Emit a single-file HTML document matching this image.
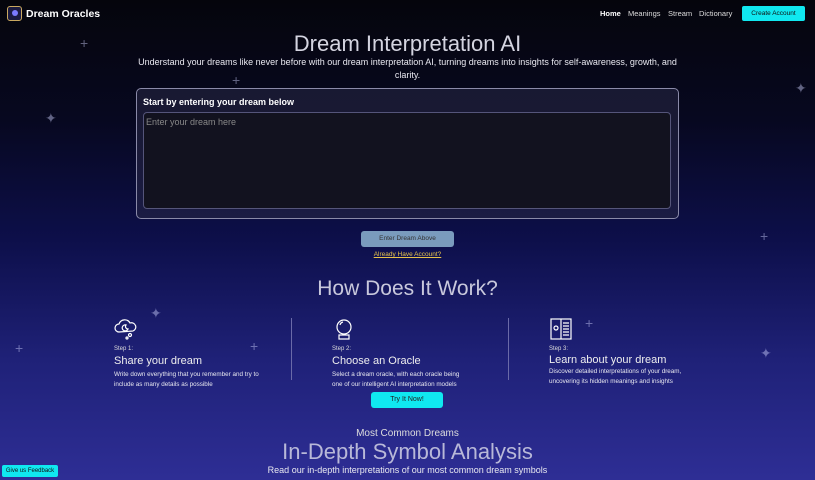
<!DOCTYPE html>
<html><head><style>
*{margin:0;padding:0;box-sizing:border-box}
body{width:815px;height:480px;overflow:hidden;font-family:"Liberation Sans",sans-serif;color:#fff;
background:linear-gradient(180deg,#05050c 0%,#070820 25%,#0d0f4a 50%,#1f2178 75%,#2e2e95 100%);position:relative}
.a{position:absolute}
.star{position:absolute;color:#cfd3ff;font-size:14px;opacity:.45}
</style></head><body>
<div class="a" style="left:7px;top:6px;width:15px;height:15px;border:1.5px solid #c9a860;border-radius:3px;background:#1a1a40"></div>
<div class="a" style="left:12px;top:10px;width:6px;height:6px;border-radius:50%;background:#7a7aff"></div>
<div class="a" style="left:26px;top:8px;font-size:10.5px;font-weight:bold">Dream Oracles</div>
<div class="a" style="left:600px;top:9px;font-size:7.5px;font-weight:bold">Home</div>
<div class="a" style="left:628px;top:9px;font-size:7.5px;color:#ddd">Meanings</div>
<div class="a" style="left:668px;top:9px;font-size:7.5px;color:#ddd">Stream</div>
<div class="a" style="left:699px;top:9px;font-size:7.5px;color:#ddd">Dictionary</div>
<div class="a" style="left:742px;top:6px;width:63px;height:15px;background:#10e8f0;border-radius:2px;color:#111;font-size:6.5px;text-align:center;line-height:15px">Create Account</div>
<div class="a" style="left:0;width:815px;top:31px;text-align:center;font-size:22px;color:#d4d4e0">Dream Interpretation AI</div>
<div class="a" style="left:130px;width:555px;top:56px;text-align:center;font-size:9px;line-height:13px;color:#e8e8f0">Understand your dreams like never before with our dream interpretation AI, turning dreams into insights for self-awareness, growth, and clarity.</div>
<div class="a" style="left:136px;top:88px;width:543px;height:131px;border:1px solid #8a8aa8;border-radius:5px;background:rgba(40,40,70,.55)"></div>
<div class="a" style="left:143px;top:97px;font-size:9px;font-weight:bold">Start by entering your dream below</div>
<div class="a" style="left:143px;top:112px;width:528px;height:97px;border:1px solid #55557a;border-radius:4px;background:#12121f"></div>
<div class="a" style="left:146px;top:117px;font-size:9px;color:#888">Enter your dream here</div>
<div class="a" style="left:361px;top:231px;width:93px;height:16px;background:#7a9bbd;border-radius:3px;color:#333;font-size:6.5px;text-align:center;line-height:16px">Enter Dream Above</div>
<div class="a" style="left:0;width:815px;top:251px;text-align:center;font-size:6.5px;color:#e7c24a;text-decoration:underline">Already Have Account?</div>
<div class="a" style="left:0;width:815px;top:277px;text-align:center;font-size:21px;color:#c8c8dc">How Does It Work?</div>
<div class="a" style="left:291px;top:318px;width:1px;height:62px;background:#6a6aa8"></div>
<div class="a" style="left:508px;top:318px;width:1px;height:62px;background:#6a6aa8"></div>
<svg class="a" style="left:114px;top:318px" width="24" height="22" viewBox="0 0 24 22" fill="none" stroke="#fff" stroke-width="1.2"><path d="M5 14a4 4 0 0 1 0-8 6 6 0 0 1 11-1 4 4 0 0 1 3 8z"/><path d="M12 7a3 3 0 1 0 2 4 2.5 2.5 0 0 1-2-4z"/><circle cx="16" cy="17" r="1.5"/><circle cx="13" cy="20" r="1"/></svg>
<svg class="a" style="left:333px;top:318px" width="22" height="22" viewBox="0 0 22 22" fill="none" stroke="#fff" stroke-width="1.2"><circle cx="11" cy="9" r="7"/><path d="M6 17h10v4H6z"/><path d="M7 7a4 4 0 0 1 3-3"/></svg>
<svg class="a" style="left:550px;top:318px" width="22" height="22" viewBox="0 0 22 22" fill="none" stroke="#fff" stroke-width="1.2"><rect x="1" y="1" width="20" height="20"/><path d="M11 1v20M13 5h6M13 8h6M13 11h6M13 14h6M13 17h6"/><circle cx="6" cy="10" r="2"/></svg>
<div class="a" style="left:114px;top:346px;font-size:6px;color:#ddd">Step 1:</div>
<div class="a" style="left:114px;top:355px;font-size:11px;color:#eee">Share your dream</div>
<div class="a" style="left:114px;top:370px;font-size:6.3px;line-height:10px;color:#e8e8f0;width:150px">Write down everything that you remember and try to include as many details as possible</div>
<div class="a" style="left:332px;top:346px;font-size:6px;color:#ddd">Step 2:</div>
<div class="a" style="left:332px;top:355px;font-size:11px;color:#eee">Choose an Oracle</div>
<div class="a" style="left:332px;top:370px;font-size:6.3px;line-height:10px;color:#e8e8f0;width:132px">Select a dream oracle, with each oracle being one of our intelligent AI interpretation models</div>
<div class="a" style="left:549px;top:346px;font-size:6px;color:#ddd">Step 3:</div>
<div class="a" style="left:549px;top:354px;font-size:11px;color:#eee">Learn about your dream</div>
<div class="a" style="left:549px;top:367px;font-size:6.3px;line-height:10px;color:#e8e8f0;width:150px">Discover detailed interpretations of your dream, uncovering its hidden meanings and insights</div>
<div class="a" style="left:371px;top:392px;width:72px;height:16px;background:#10e8f0;border-radius:3px;color:#222;font-size:7px;text-align:center;line-height:16px">Try It Now!</div>
<div class="a" style="left:0;width:815px;top:428px;text-align:center;font-size:10px;color:#ddd">Most Common Dreams</div>
<div class="a" style="left:0;width:815px;top:439px;text-align:center;font-size:22px;color:#b8b8d8">In-Depth Symbol Analysis</div>
<div class="a" style="left:0;width:815px;top:465px;text-align:center;font-size:9px;color:#e8e8f0">Read our in-depth interpretations of our most common dream symbols</div>
<div class="a" style="left:2px;top:465px;width:56px;height:12px;background:#10e8f0;border-radius:2px;color:#111;font-size:6px;text-align:center;line-height:12px">Give us Feedback</div>
<span class="star" style="left:45px;top:110px">✦</span><span class="star" style="left:80px;top:35px">+</span>
<span class="star" style="left:150px;top:305px">✦</span><span class="star" style="left:250px;top:338px">+</span>
<span class="star" style="left:585px;top:315px">+</span><span class="star" style="left:760px;top:345px">✦</span>
<span class="star" style="left:760px;top:228px">+</span><span class="star" style="left:795px;top:80px">✦</span>
<span class="star" style="left:232px;top:72px">+</span><span class="star" style="left:15px;top:340px">+</span>
</body></html>
